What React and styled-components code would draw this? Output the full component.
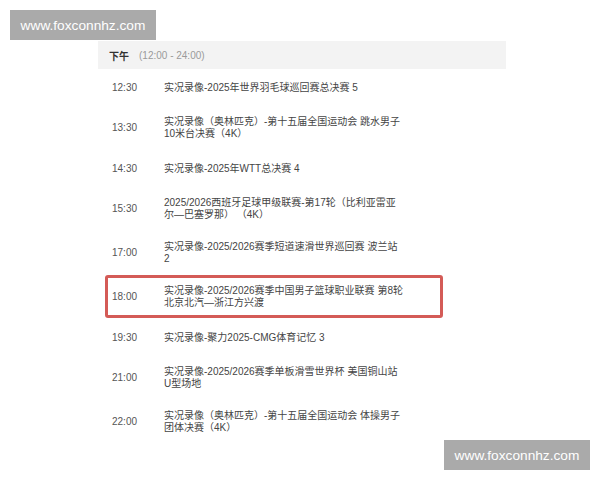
import React from "react";
import styled, { createGlobalStyle } from "styled-components";

const GlobalStyle = createGlobalStyle`
  html, body {
    margin: 0;
    padding: 0;
    background: #ffffff;
  }
  body {
    font-family: "Liberation Sans", "Noto Sans CJK SC", sans-serif;
  }
`;

const Page = styled.div`
  position: relative;
  width: 600px;
  height: 480px;
  overflow: hidden;
  padding: 41px 0 0 98px;
  box-sizing: border-box;
`;

const Schedule = styled.section`
  width: 408px;
`;

const Header = styled.div`
  display: flex;
  align-items: center;
  height: 28px;
  padding-left: 11px;
  gap: 10px;
  background: #f3f3f3;
  font-size: 10px;
`;

const Period = styled.span`
  font-weight: bold;
  color: #333;
`;

const Range = styled.span`
  color: #9a9a9a;
`;

const Row = styled.div`
  position: relative;
  display: flex;
  align-items: center;
  min-height: 37px;
  padding: 10px 0 10px 14px;
  box-sizing: border-box;
  font-size: 10px;
  line-height: 12px;
  color: #444;
`;

const Time = styled.span`
  width: 52px;
  flex: none;
  color: #555;
`;

const Title = styled.div`
  display: flex;
  flex-direction: column;
`;

const Line = styled.span`
  white-space: nowrap;
`;

const Highlight = styled.div`
  position: absolute;
  top: 0;
  bottom: 1px;
  left: 7px;
  width: 338px;
  border: 3px solid #d45b57;
  border-radius: 3px;
  box-sizing: border-box;
  pointer-events: none;
`;

const Watermark = styled.div`
  position: absolute;
  ${(p) => (p.$corner === "top" ? "top: 10px; left: 10px;" : "top: 440px; left: 444px;")}
  width: 146px;
  height: 30px;
  display: flex;
  align-items: center;
  justify-content: center;
  background: #aaaaaa;
  color: #ffffff;
  font-family: "Liberation Sans", Arial, sans-serif;
  font-size: 13.7px;
`;

const programs = [
  { time: "12:30", lines: ["实况录像-2025年世界羽毛球巡回赛总决赛 5"] },
  { time: "13:30", lines: ["实况录像（奥林匹克）-第十五届全国运动会 跳水男子", "10米台决赛（4K）"] },
  { time: "14:30", lines: ["实况录像-2025年WTT总决赛 4"] },
  { time: "15:30", lines: ["2025/2026西班牙足球甲级联赛-第17轮（比利亚雷亚", "尔—巴塞罗那） （4K）"] },
  { time: "17:00", lines: ["实况录像-2025/2026赛季短道速滑世界巡回赛 波兰站", "2"] },
  { time: "18:00", lines: ["实况录像-2025/2026赛季中国男子篮球职业联赛 第8轮", "北京北汽—浙江方兴渡"], marked: true },
  { time: "19:30", lines: ["实况录像-聚力2025-CMG体育记忆 3"] },
  { time: "21:00", lines: ["实况录像-2025/2026赛季单板滑雪世界杯 美国铜山站", "U型场地"] },
  { time: "22:00", lines: ["实况录像（奥林匹克）-第十五届全国运动会 体操男子", "团体决赛（4K）"] },
];

export default function App() {
  return (
    <>
      <GlobalStyle />
      <Page>
        <Schedule>
          <Header>
            <Period>下午</Period>
            <Range>(12:00 - 24:00)</Range>
          </Header>
          {programs.map((p) => (
            <Row key={p.time}>
              <Time>{p.time}</Time>
              <Title>
                {p.lines.map((l) => (
                  <Line key={l}>{l}</Line>
                ))}
              </Title>
              {p.marked && <Highlight />}
            </Row>
          ))}
        </Schedule>
        <Watermark $corner="top">www.foxconnhz.com</Watermark>
        <Watermark $corner="bottom">www.foxconnhz.com</Watermark>
      </Page>
    </>
  );
}
